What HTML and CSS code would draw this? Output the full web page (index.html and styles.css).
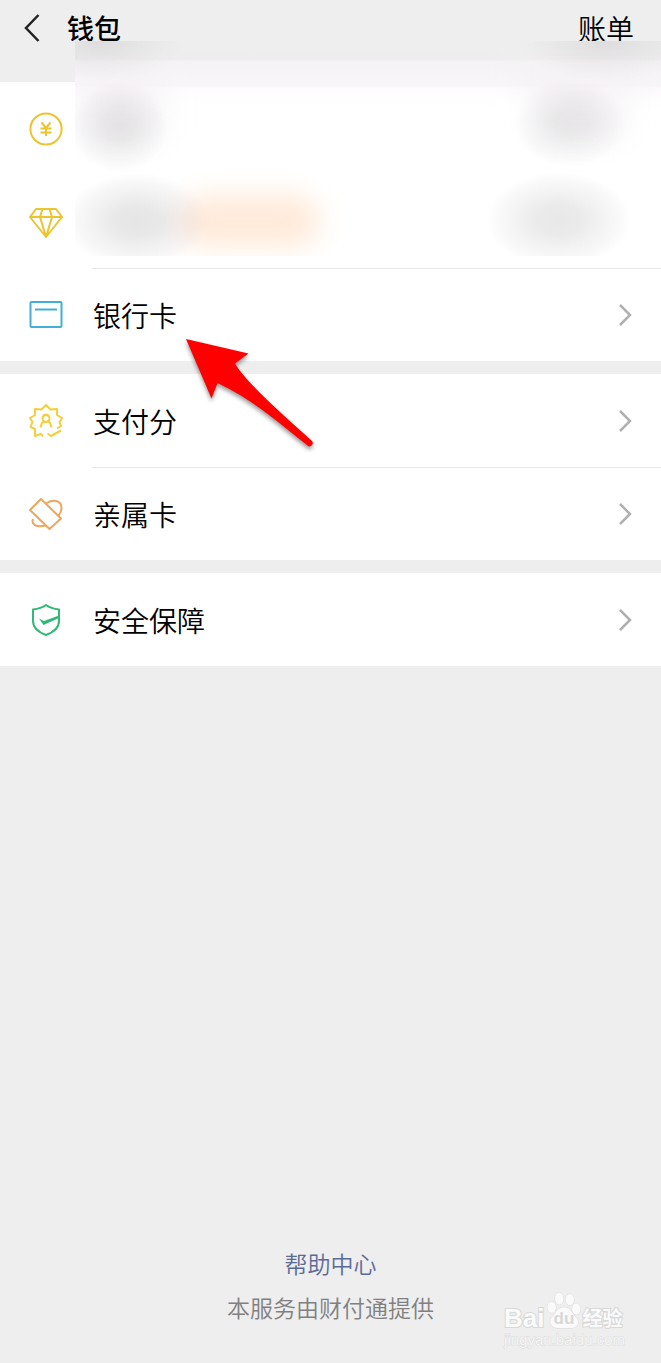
FILE: index.html
```html
<!DOCTYPE html>
<html lang="zh-CN">
<head>
<meta charset="utf-8">
<meta name="viewport" content="width=device-width, initial-scale=1">
<title>钱包</title>
<link rel="stylesheet" href="styles.css">
</head>
<body>
<div class="page">
  <header class="topbar">
    <button class="back" type="button" aria-label="返回">
      <svg width="16" height="28" viewBox="0 0 16 28"><path d="M14.500 1 2 14l12.500 13"/></svg>
    </button>
    <h1 class="title">钱包</h1>
    <a class="bill" href="#">账单</a>
  </header>

  <main class="groups">
    <section class="group">
      <div class="row">
        <svg class="icon gold" viewBox="0 0 34 34"><circle cx="17" cy="17" r="15.600"/><path d="m12.500 10.500 4.500 5.500 4.500-5.500M11.500 16.500h11M11.500 20.500h11M17 16v8"/></svg>
      </div>
      <div class="row">
        <svg class="icon gold" viewBox="0 0 34 34"><path d="M7 4h20l6 8-16 20L1 12zM1 12h32M13.500 4 11 12l6 20 6-20-2.500-8"/></svg>
      </div>
      <a class="row ruled" href="#">
        <svg class="icon blue" viewBox="0 0 34 34"><rect x="1.500" y="4" width="31" height="25" rx="1"/><path d="M6 11.500h22"/></svg>
        <span class="label">银行卡</span>
        <svg class="chevron" viewBox="0 0 14 24"><path d="m2 2 10 10L2 22"/></svg>
      </a>
    </section>

    <section class="group">
      <a class="row" href="#">
        <svg class="icon yellow" viewBox="0 0 34 34"><path d="M14 32.500 12 30l-6 2v-7l-4.500-2 2-5-2.500-4 5-3V5l6.500.5L17 1l4.500 4.500L28 5v6l5 3-2.500 4 1.500 4-4 2.500M18.500 29.500l3.500 2.500 10-5.500"/><circle cx="17" cy="14.500" r="3.500"/><path d="M11.500 23.500c.5-3.500 2-5.500 4-6.500M18 17c2.500.5 4 3 4.500 6.500M14 12c2-2 4-2 6 0"/></svg>
        <span class="label">支付分</span>
        <svg class="chevron" viewBox="0 0 14 24"><path d="m2 2 10 10L2 22"/></svg>
      </a>
      <a class="row ruled" href="#">
        <svg class="icon orange" viewBox="0 0 34 34"><path d="M12 2 1 13l19.500 19L32 21.500zM17.500 6c8-4.500 15-2 15 5 0 3-1 5.500-3 8M4 22c-2 5 3 9 12.500 6.500"/></svg>
        <span class="label">亲属卡</span>
        <svg class="chevron" viewBox="0 0 14 24"><path d="m2 2 10 10L2 22"/></svg>
      </a>
    </section>

    <section class="group">
      <a class="row" href="#">
        <svg class="icon green" viewBox="0 0 34 34"><path d="M17 2c4 3 8 4 13 4.500V18c0 6-5 11-13 14C9 29 4 24 4 18V6.500C9 6 13 5 17 2z"/><path class="fill" d="m10 15.500 5 2.500L30 12.500v2.500L14.500 22z"/></svg>
        <span class="label">安全保障</span>
        <svg class="chevron" viewBox="0 0 14 24"><path d="m2 2 10 10L2 22"/></svg>
      </a>
    </section>
  </main>

  <footer class="footer">
    <a class="help" href="#">帮助中心</a>
    <p class="provider">本服务由财付通提供</p>
  </footer>

  <svg class="smudge" viewBox="0 0 586 215" preserveAspectRatio="none" aria-hidden="true">
    <defs>
      <linearGradient id="fade" x1="0" y1="0" x2="0" y2="1">
        <stop offset="0" stop-color="#eee"/><stop offset=".085" stop-color="#eeedee"/>
        <stop offset=".095" stop-color="#f5f2f5"/><stop offset=".17" stop-color="#f7f5f7"/>
        <stop offset=".21" stop-color="#f8f7f8"/><stop offset=".22" stop-color="#fefbfe"/><stop offset=".3" stop-color="#fff"/>
      </linearGradient>
      <radialGradient id="gray">
        <stop offset="0" stop-color="#777" stop-opacity=".19"/><stop offset=".3" stop-color="#808080" stop-opacity=".18"/>
        <stop offset=".6" stop-color="#8b858e" stop-opacity=".11"/><stop offset=".8" stop-color="#9b8f9b" stop-opacity=".07"/><stop offset="1" stop-color="#b090b0" stop-opacity="0"/>
      </radialGradient>
      <radialGradient id="top">
        <stop offset="0" stop-color="#777" stop-opacity=".15"/><stop offset=".5" stop-color="#888" stop-opacity=".08"/><stop offset="1" stop-color="#999" stop-opacity="0"/>
      </radialGradient>
      <filter id="soft" x="-30%" y="-60%" width="160%" height="220%"><feGaussianBlur stdDeviation="14"/></filter>
    </defs>
    <rect width="586" height="215" fill="url(#fade)"/>
    <path d="M0 18h60Q90 20 90 60v40H0zM440 18h146v28h-18q-18 0-18 24v30H460V70q0-24-20-24z" fill="#f5f2f5" filter="url(#soft)" opacity=".7"/>
    <ellipse cx="27" cy="0" rx="80" ry="40" fill="url(#top)"/>
    <ellipse cx="531" cy="0" rx="85" ry="40" fill="url(#top)"/>
    <ellipse cx="45" cy="86" rx="48" ry="46" fill="url(#gray)" opacity=".8"/>
    <ellipse cx="495" cy="82" rx="56" ry="44" fill="url(#gray)" opacity=".7"/>
    <rect x="105" y="154" width="140" height="52" rx="26" fill="#ffead9" filter="url(#soft)"/>
    <ellipse cx="62" cy="180" rx="72" ry="48" fill="url(#gray)"/>
    <ellipse cx="484" cy="179" rx="72" ry="48" fill="url(#gray)" opacity=".9"/>
  </svg>

  <svg class="pointer" width="140" height="120" viewBox="0 0 140 120" aria-hidden="true">
    <path d="M6 4 68.500 18.500 55 28.500C65 46 100 77 131.500 105.500a3 3 0 0 1-4 5C98 87 70 63 37.500 48L31.500 63.500z"/>
  </svg>

  <div class="watermark">
    <div class="brand">
      <span class="latin">Bai</span>
      <svg class="paw" width="36" height="40" viewBox="0 0 38 40"><ellipse cx="6" cy="17" rx="4.500" ry="6"/><ellipse cx="14" cy="8" rx="4.500" ry="6.500"/><ellipse cx="25" cy="9" rx="4.500" ry="6"/><ellipse cx="32" cy="19" rx="4.500" ry="6"/><path d="M19 17c-7 0-9 7-13 11-4 6 0 11 6 11h15c6 0 9-6 5-11-4-4-6-11-13-11z"/><text x="19" y="35">du</text></svg>
      <span class="han">经验</span>
    </div>
    <div class="site">jingyan.baidu.com</div>
  </div>
</div>
</body>
</html>
```

FILE: styles.css
```css
* { box-sizing: border-box; }

body {
  margin: 0;
  background: #eee;
  color: #000;
  font-family: "Noto Sans CJK SC", sans-serif;
  font-size: 28px;
  font-weight: 350;
  line-height: 40px;
}

a { color: inherit; text-decoration: none; }

svg { fill: none; flex: none; }

.page {
  position: relative;
  display: flex;
  flex-direction: column;
  min-height: 100vh;
  overflow: hidden;
}

.topbar {
  display: flex;
  align-items: center;
  height: 82px;
  padding: 0 27px 26px 24px;
}

.back {
  display: flex;
  margin: 0 27px 0 0;
  padding: 0;
  border: 0;
  background: none;
  stroke: #222;
  stroke-width: 2.5;
}

.title {
  flex: 1;
  margin: 0;
  font-size: 27px;
  font-weight: 500;
}

.groups {
  display: flex;
  flex-direction: column;
  gap: 13px;
}

.group { background: #fff; }

.row {
  position: relative;
  display: flex;
  align-items: center;
  height: 93px;
  padding: 0 29px;
}

.ruled::before {
  content: "";
  position: absolute;
  top: 0;
  right: 0;
  left: 92px;
  height: 1px;
  background: #e8e8e8;
}

.icon {
  width: 34px;
  height: 34px;
  margin-right: 30px;
  stroke-width: 2;
  stroke-linejoin: round;
}

.gold { stroke: #ebc52f; }
.blue { stroke: #43aed6; }
.yellow { stroke: #f3cf38; }
.orange { stroke: #eba85c; }
.green { stroke: #2fb975; }
.green .fill { fill: #2fb975; stroke: none; }

.label { flex: 1; }

.chevron {
  width: 14px;
  height: 24px;
  stroke: #b0b0b0;
  stroke-width: 2.5;
}

.footer {
  margin-top: auto;
  padding-bottom: 34px;
  color: #808080;
  font-size: 23px;
  line-height: 44px;
  text-align: center;
}

.help { color: #5b6b99; }

.provider { margin: 0; }

.smudge {
  position: absolute;
  top: 41px;
  left: 75px;
  width: calc(100% - 75px);
  height: 215px;
}

.pointer {
  position: absolute;
  top: 335px;
  left: 180px;
  fill: #f00;
  filter: drop-shadow(0 3px 2px rgba(0, 0, 0, .4));
}

.watermark {
  position: absolute;
  right: 36px;
  bottom: 13px;
  color: #fafafa;
  line-height: 20px;
  -webkit-text-stroke: 2px #d8d8d8;
  paint-order: stroke fill;
}

.brand {
  display: flex;
  align-items: flex-end;
  gap: 1px;
}

.latin {
  font: bold 26px/24px "Liberation Sans", sans-serif;
}

.han {
  font-size: 20px;
  font-weight: 700;
  line-height: 24px;
}

.paw {
  fill: #fafafa;
  stroke: #d8d8d8;
}

.paw text {
  fill: #d8d8d8;
  stroke: none;
  -webkit-text-stroke: 0;
  font: bold 18px "Liberation Sans", sans-serif;
  text-anchor: middle;
}

.site {
  color: #f4f4f4;
  font: 15px/20px "Liberation Sans", sans-serif;
  -webkit-text-stroke: 1px #dcdcdc;
}
```
